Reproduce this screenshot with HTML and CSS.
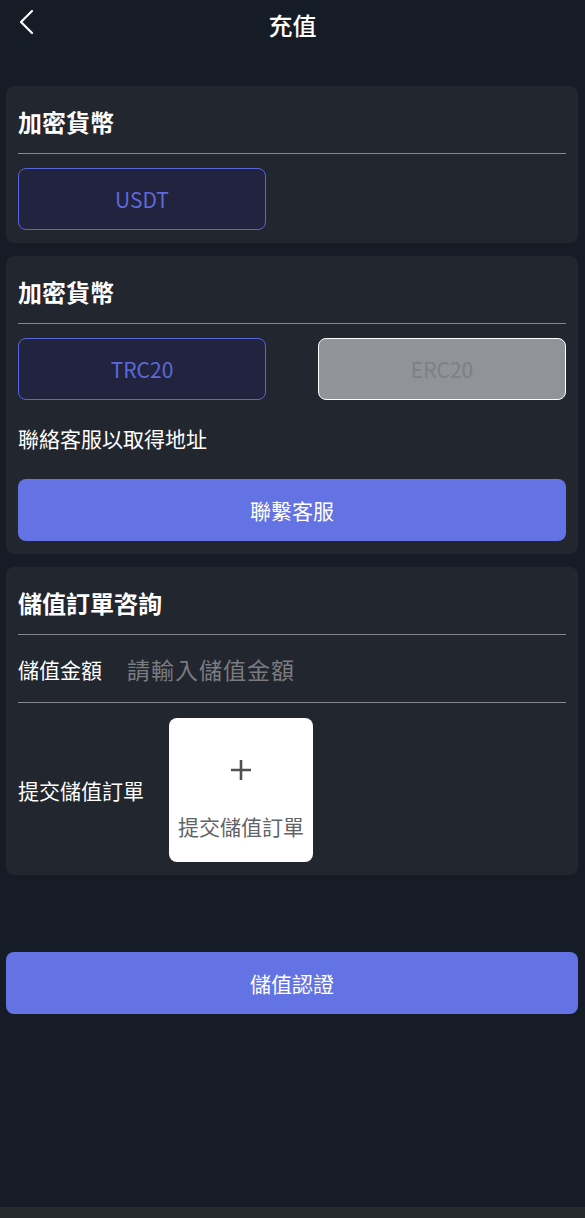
FILE: index.html
```html
<!DOCTYPE html>
<html lang="zh-Hant">
<head>
<meta charset="utf-8">
<title>充值</title>
<link rel="stylesheet" href="styles.css">
</head>
<body>
<div class="page">
  <header class="topbar">
    <span class="back">
      <svg width="16" height="26" viewBox="0 0 16 26"><polyline points="13,2 2,13 13,24" fill="none" stroke="#ffffff" stroke-width="2.2" stroke-linecap="round" stroke-linejoin="round"/></svg>
    </span>
    <h1 class="title">充值</h1>
  </header>
  <main class="main">
    <section class="card">
      <h2 class="card-title">加密貨幣</h2>
      <div class="options">
        <div class="opt active">USDT</div>
      </div>
    </section>
    <section class="card">
      <h2 class="card-title">加密貨幣</h2>
      <div class="options two">
        <div class="opt active">TRC20</div>
        <div class="opt disabled">ERC20</div>
      </div>
      <p class="note">聯絡客服以取得地址</p>
      <div class="btn btn-inner">聯繫客服</div>
    </section>
    <section class="card">
      <h2 class="card-title">儲值訂單咨詢</h2>
      <div class="field">
        <span class="label">儲值金額</span>
        <span class="placeholder">請輸入儲值金額</span>
      </div>
      <div class="upload-row">
        <span class="label">提交儲值訂單</span>
        <div class="upload">
          <svg class="plus" width="22" height="22" viewBox="0 0 22 22"><path d="M11 1v20M1 11h20" stroke="#4f5053" stroke-width="2.6" fill="none"/></svg>
          <span class="upload-text">提交儲值訂單</span>
        </div>
      </div>
    </section>
    <div class="btn btn-main">儲值認證</div>
  </main>
  <footer class="footer"></footer>
</div>
</body>
</html>
```
FILE: styles.css
```css
* { box-sizing: border-box; }
html, body { margin: 0; padding: 0; }
body {
  background: #161c25;
  color: #ffffff;
  font-family: "Noto Sans CJK TC", "Noto Sans", sans-serif;
}
.page {
  min-height: 100vh;
  display: flex;
  flex-direction: column;
}
.topbar {
  height: 50px;
  display: flex;
  align-items: center;
  justify-content: center;
  position: relative;
}
.back {
  position: absolute;
  left: 19px;
  top: 9px;
  display: flex;
}
.title {
  margin: 0;
  font-size: 24px;
  font-weight: 500;
  line-height: 50px;
}
.main {
  flex: 1;
  padding: 36px 7px 0 6px;
  display: flex;
  flex-direction: column;
}
.card {
  background: #22262f;
  border-radius: 8px;
  padding: 0 12px 13px;
  margin-bottom: 13px;
}
.card-title {
  margin: 0;
  padding: 20px 0 15px;
  font-size: 24px;
  line-height: 32px;
  font-weight: 700;
  border-bottom: 1px solid #85878c;
}
.options {
  margin-top: 14px;
  display: flex;
  justify-content: space-between;
}
.opt {
  width: 248px;
  height: 62px;
  border-radius: 8px;
  display: flex;
  align-items: center;
  justify-content: center;
  font-size: 21px;
}
.opt.active {
  background: #21233f;
  border: 1px solid #5a66dc;
  color: #5c69da;
}
.opt.disabled {
  background: #909398;
  border: 1px solid #ffffff;
  color: #7d8084;
}
.note {
  margin: 24px 0 0;
  font-size: 21px;
  line-height: 28px;
}
.btn {
  height: 62px;
  border-radius: 8px;
  background: #6473e3;
  color: #ffffff;
  display: flex;
  align-items: center;
  justify-content: center;
  font-size: 21px;
}
.btn-inner {
  margin-top: 27px;
}
.btn-main {
  margin-top: 64px;
}
.field {
  height: 68px;
  display: flex;
  align-items: center;
  border-bottom: 1px solid #85878c;
}
.label {
  font-size: 21px;
  line-height: 28px;
}
.placeholder {
  margin-left: 25px;
  font-size: 23px;
  color: #7a7c80;
  letter-spacing: 1px;
}
.upload-row {
  margin-top: 15px;
  display: flex;
  align-items: center;
}
.upload {
  margin-left: 25px;
  width: 144px;
  height: 144px;
  background: #ffffff;
  border-radius: 8px;
  display: flex;
  flex-direction: column;
  align-items: center;
}
.plus {
  margin-top: 41px;
}
.upload-text {
  margin-top: 31px;
  font-size: 21px;
  color: #616266;
  line-height: 28px;
}
.footer {
  height: 11px;
  background: #28292c;
}
```
